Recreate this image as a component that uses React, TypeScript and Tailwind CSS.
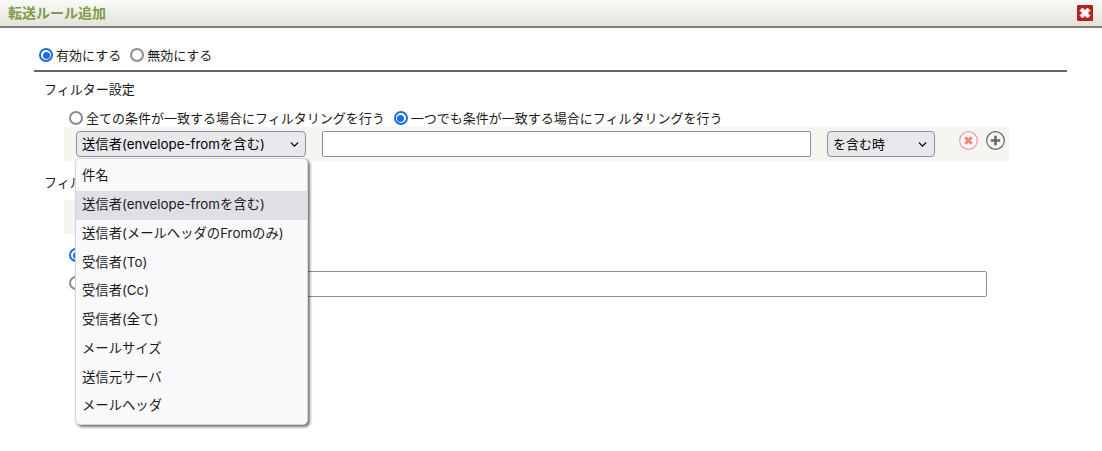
import { ChevronDown } from "lucide-react";

const options = [
  "件名",
  "送信者(envelope-fromを含む)",
  "送信者(メールヘッダのFromのみ)",
  "受信者(To)",
  "受信者(Cc)",
  "受信者(全て)",
  "メールサイズ",
  "送信元サーバ",
  "メールヘッダ",
];

function Radio({ checked, className = "" }: { checked?: boolean; className?: string }) {
  return checked ? (
    <span className={`w-[14px] h-[14px] rounded-full border-2 border-[#1a6fdc] flex items-center justify-center shrink-0 bg-white ${className}`}>
      <span className="w-[7px] h-[7px] rounded-full bg-[#1a6fdc]" />
    </span>
  ) : (
    <span className={`w-[14px] h-[14px] rounded-full border-2 border-[#8b8b93] shrink-0 bg-white ${className}`} />
  );
}

function RadioLabel({ checked, label }: { checked?: boolean; label: string }) {
  return (
    <label className="flex items-center gap-[3px]">
      <Radio checked={checked} />
      <span>{label}</span>
    </label>
  );
}

function FakeSelect({ label, className }: { label: string; className: string }) {
  return (
    <div
      className={`h-[26px] flex items-center justify-between rounded-[4px] border border-[#8f8d9d] bg-[#e9e8ed] text-black ${className}`}
    >
      <span>{label}</span>
      <ChevronDown size={13} strokeWidth={2.5} />
    </div>
  );
}

export default function App() {
  return (
    <div className="relative w-[1102px] h-[451px] bg-white overflow-hidden text-[13px] leading-[18px] text-[#1a1a1a] font-['Inter','Noto_Sans_CJK_JP',sans-serif]">
      <div className="h-[28px] flex items-center justify-between pl-2 pr-[9px] bg-gradient-to-b from-[#fafaf8] to-[#e4e3da] border-b-2 border-[#807f7a]">
        <span className="font-bold text-[#7f9b4e] text-[14px]">転送ルール追加</span>
        <span className="w-4 h-4 bg-[#b5221c] rounded-[1px] flex items-center justify-center">
          <svg width="14" height="14" viewBox="0 0 14 14">
            <path d="M2 4.5 L4.5 2 L7 4.5 L9.5 2 L12 4.5 L9.5 7 L12 9.5 L9.5 12 L7 9.5 L4.5 12 L2 9.5 L4.5 7 Z" fill="#fff" stroke="#fff" strokeWidth="0.8" />
          </svg>
        </span>
      </div>

      <div className="pl-[34px] pr-[35px]">
        <div className="flex items-center gap-[9px] pl-[5px] h-[18px] mt-[18px]">
          <RadioLabel checked label="有効にする" />
          <RadioLabel label="無効にする" />
        </div>
        <div className="h-[2px] bg-[#666] mt-[6px]" />

        <div className="pl-[10px] mt-[8px] h-[18px]">フィルター設定</div>

        <div className="flex items-center gap-[9px] pl-[35px] mt-[11px] h-[18px]">
          <RadioLabel label="全ての条件が一致する場合にフィルタリングを行う" />
          <RadioLabel checked label="一つでも条件が一致する場合にフィルタリングを行う" />
        </div>

        <div className="ml-[30px] w-[945px] h-[34px] bg-[#f6f6f1] flex items-center pl-[12px]">
          <FakeSelect label="送信者(envelope-fromを含む)" className="w-[230px] pl-[5px] pr-[4px] text-[13.33px]" />
          <div className="ml-[16px] w-[489px] h-[26px] bg-white border border-[#8f8d9d] rounded-[2px]" />
          <FakeSelect label="を含む時" className="ml-[16px] w-[108px] pl-[5px] pr-[5px]" />
          <div className="ml-[24px] flex items-center gap-[8px] -mt-[8px]">
            <svg width="19" height="19" viewBox="0 0 19 19">
              <circle cx="9.5" cy="9.5" r="8.8" fill="#fafafa" stroke="#f59a96" strokeWidth="1.2" />
              <path d="M6.3 6.3 L12.7 12.7 M12.7 6.3 L6.3 12.7" stroke="#f28480" strokeWidth="3" />
            </svg>
            <svg width="19" height="19" viewBox="0 0 19 19">
              <circle cx="9.5" cy="9.5" r="8.8" fill="#f4f4f0" stroke="#666" strokeWidth="1.2" />
              <path d="M9.5 4.8 V14.2 M4.8 9.5 H14.2" stroke="#666" strokeWidth="2.6" />
            </svg>
          </div>
        </div>

        <div className="pl-[10px] mt-[12px] h-[18px]">フィルター動作</div>

        <div className="ml-[30px] w-[200px] h-[34px] bg-[#f6f6f1] mt-[9px]" />

        <div className="flex items-center pl-[35px] mt-[12px] h-[18px]">
          <Radio checked />
        </div>
        <div className="flex items-center pl-[35px] mt-[7px] h-[26px]">
          <Radio className="-mt-[2px]" />
          <div className="ml-[100px] w-[804px] h-[26px] bg-white border border-[#8f8d9d] rounded-[2px]" />
        </div>
      </div>

      <div className="absolute left-[75px] top-[158px] w-[233px] h-[267px] bg-[#f9f9fb] rounded-[5px] border border-[#d5d4da] shadow-[2px_2px_3px_rgba(0,0,0,0.55)] pt-[3px] text-[13.33px]">
        {options.map((o, i) => (
          <div
            key={o}
            className={`h-[28.75px] flex items-center pl-[6px] pb-[2px] ${i === 1 ? "bg-[#e0dfe6]" : ""}`}
          >
            {o}
          </div>
        ))}
      </div>
    </div>
  );
}
